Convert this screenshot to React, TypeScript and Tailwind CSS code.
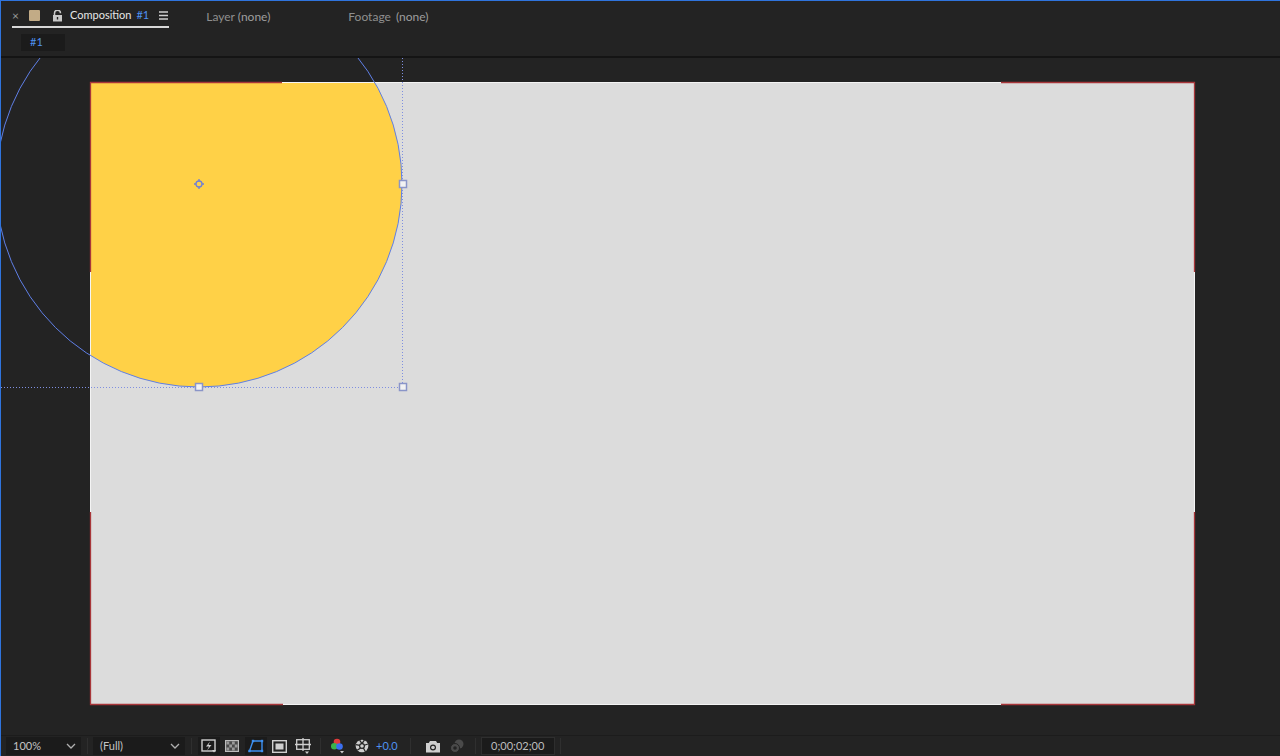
import React from 'react';

const font = { fontFamily: 'Lato, "Noto Sans", sans-serif' };

function Chevron() {
  return (
    <svg width="10" height="6" viewBox="0 0 10 6" className="shrink-0">
      <path d="M1 1l4 4 4-4" fill="none" stroke="#b0b0b0" strokeWidth="1.3" />
    </svg>
  );
}

export default function App() {
  // viewer coordinates (viewer origin = page x 1, y 58)
  const cx = 198, cy = 126, r = 203;
  const bx = 402, by = 329;
  const canvas = { x: 89, y: 24, w: 1105, h: 623 };
  return (
    <div className="w-[1280px] h-[756px] flex flex-col bg-[#232323] border-l border-t border-[#2f74dd] overflow-hidden" style={font}>
      {/* header */}
      <div className="h-[57px] flex flex-col border-b-2 border-[#141414] shrink-0">
        <div className="h-[27px] flex items-center text-[11px] pt-[4px]">
          <div className="flex items-center ml-[11px] h-full border-b-2 border-[#d8d8d8] pr-[1px]">
            <span className="text-[#9a9a9a] text-[12px] w-[16px] leading-none">×</span>
            <span className="w-[11px] h-[11px] bg-[#c2ab86] rounded-[1px] ml-[1px]" />
            <svg width="11" height="12" viewBox="0 0 11 12" className="ml-[12px]">
              <path d="M2.5 5V3.2a3 3 0 0 1 6 0" fill="none" stroke="#c8c8c8" strokeWidth="1.5" />
              <rect x="1" y="5" width="9" height="6.5" fill="#c8c8c8" />
              <rect x="4.8" y="7" width="1.4" height="2.5" fill="#232323" />
            </svg>
            <span className="text-[#e6e6e6] ml-[7px]">Composition</span>
            <span className="text-[#4f92f0] ml-[5px]">#1</span>
            <svg width="9" height="9" viewBox="0 0 9 9" className="ml-[10px]">
              <path d="M0 1h9M0 4.5h9M0 8h9" stroke="#cfcfcf" strokeWidth="1.3" />
            </svg>
          </div>
          <span className="ml-[37px] text-[12px] text-[#8f8f8f]">Layer <span className="text-[#9e9e9e]">(none)</span></span>
          <span className="ml-[78px] text-[12px] text-[#8f8f8f]">Footage <span className="text-[#9e9e9e] ml-[2px]">(none)</span></span>
        </div>
        <div className="flex-1 flex items-center">
          <div className="ml-[20px] w-[44px] h-[17px] bg-[#1b1b1b] flex items-center pl-[9px] text-[11px] text-[#4f92f0]">#1</div>
        </div>
      </div>

      {/* viewer */}
      <div className="relative flex-1 pl-[89px] pt-[24px] overflow-hidden">
        <div className="w-[1105px] h-[623px] bg-[#dcdcdc]" />
        <svg className="absolute inset-0" width="1280" height="679">
          <defs>
            <clipPath id="cv">
              <rect x={canvas.x} y={canvas.y} width={canvas.w} height={canvas.h} />
            </clipPath>
          </defs>
          <circle cx={cx} cy={cy} r={r} fill="#ffd147" clipPath="url(#cv)" />
          {/* canvas edge */}
          <rect x={canvas.x + 0.5} y={canvas.y + 0.5} width={canvas.w - 1} height={canvas.h - 1} fill="none" stroke="#f4f4f4" strokeWidth="1" />
          {/* red corners */}
          <g stroke="#a8363a" strokeWidth="1.3" fill="none">
            <path d={`M${canvas.x + 0.5} ${canvas.y + 190}V${canvas.y + 0.5}H${canvas.x + 192}`} />
            <path d={`M${canvas.x + canvas.w - 194} ${canvas.y + 0.5}H${canvas.x + canvas.w - 0.5}V${canvas.y + 190}`} />
            <path d={`M${canvas.x + 0.5} ${canvas.y + canvas.h - 193}V${canvas.y + canvas.h - 0.5}H${canvas.x + 193}`} />
            <path d={`M${canvas.x + canvas.w - 194} ${canvas.y + canvas.h - 0.5}H${canvas.x + canvas.w - 0.5}V${canvas.y + canvas.h - 193}`} />
          </g>
          {/* shape outline */}
          <circle cx={cx} cy={cy} r={r} fill="none" stroke="#5f7fe6" strokeWidth="1" />
          {/* bounding box */}
          <g stroke="#7f8fe0" strokeWidth="1" strokeDasharray="1 2" fill="none">
            <path d={`M${bx - 0.5} 0V${by}`} />
            <path d={`M0 ${by + 0.5}H${bx}`} />
          </g>
          {/* handles */}
          {[
            [bx, cy],
            [cx, by],
            [bx, by],
          ].map(([x, y], i) => (
            <rect key={i} x={x - 3.5} y={y - 3.5} width="7" height="7" fill="#f2f2f2" stroke="#8a95c8" strokeWidth="1.5" />
          ))}
          {/* anchor point */}
          <g stroke="#6f7fd6" strokeWidth="1.3" fill="none">
            <circle cx={cx} cy={cy} r="3" />
            <path d={`M${cx - 5} ${cy}h2M${cx + 3} ${cy}h2M${cx} ${cy - 5}v2M${cx} ${cy + 3}v2`} />
          </g>
        </svg>
      </div>

      {/* bottom bar */}
      <div className="h-[21px] shrink-0 flex items-center border-t border-[#1c1c1c] text-[11px] text-[#c4c4c4]">
        <div className="ml-[5px] w-[75px] h-[18px] bg-[#1b1b1b] flex items-center justify-between pl-[7px] pr-[5px]">
          <span>100%</span>
          <Chevron />
        </div>
        <div className="w-[12px] flex justify-center"><div className="w-px h-[16px] bg-[#2f2f2f]" /></div>
        <div className="w-[92px] h-[18px] bg-[#1b1b1b] flex items-center justify-between pl-[7px] pr-[5px]">
          <span>(Full)</span>
          <Chevron />
        </div>
        <div className="w-[13px] flex justify-center"><div className="w-px h-[16px] bg-[#2f2f2f]" /></div>
        {/* fast previews */}
        <div className="w-[22px] h-[18px] bg-[#1b1b1b] flex items-center justify-center">
          <svg width="16" height="14" viewBox="0 0 16 14">
            <rect x="1" y="1" width="13" height="11" fill="none" stroke="#cfcfcf" strokeWidth="1.4" />
            <path d="M9 2.5L5 7.5h3l-2 4 4.5-5.5H7.5z" fill="#cfcfcf" />
            <path d="M11 11h4l-2 2.5z" fill="#cfcfcf" />
          </svg>
        </div>
        {/* transparency grid */}
        <div className="w-[24px] flex items-center justify-center">
          <svg width="14" height="12" viewBox="0 0 14 12">
            <rect x="0.6" y="0.6" width="12.8" height="10.8" fill="#4a4a4a" stroke="#bdbdbd" strokeWidth="1.2" />
            {[0, 1, 2, 3].map((c) =>
              [0, 1, 2].map((rr) =>
                (c + rr) % 2 === 0 ? <rect key={`${c}-${rr}`} x={1.5 + c * 2.75} y={1.5 + rr * 3} width="2.75" height="3" fill="#9a9a9a" /> : null
              )
            )}
          </svg>
        </div>
        {/* mask path visibility (active) */}
        <div className="w-[22px] h-[18px] bg-[#1b1b1b] flex items-center justify-center ml-[1px]">
          <svg width="16" height="14" viewBox="0 0 16 14">
            <path d="M5 2h9v10H1.5z" fill="none" stroke="#3d8ff0" strokeWidth="1.4" />
            <rect x="3.8" y="0.8" width="2.4" height="2.4" fill="#3d8ff0" />
            <rect x="12.8" y="0.8" width="2.4" height="2.4" fill="#3d8ff0" />
            <rect x="0.3" y="10.8" width="2.4" height="2.4" fill="#3d8ff0" />
            <rect x="12.8" y="10.8" width="2.4" height="2.4" fill="#3d8ff0" />
          </svg>
        </div>
        {/* region of interest */}
        <div className="w-[24px] flex items-center justify-center">
          <svg width="15" height="13" viewBox="0 0 15 13">
            <rect x="0.7" y="0.7" width="13.6" height="11.6" fill="none" stroke="#cfcfcf" strokeWidth="1.4" />
            <rect x="3.5" y="3.5" width="8" height="6" fill="#cfcfcf" />
          </svg>
        </div>
        {/* grid & guides */}
        <div className="w-[24px] flex items-center justify-center">
          <svg width="16" height="16" viewBox="0 0 16 16">
            <rect x="1.7" y="1.7" width="12.6" height="9.6" fill="none" stroke="#cfcfcf" strokeWidth="1.3" />
            <path d="M8 0v13M0 6.5h16" stroke="#cfcfcf" strokeWidth="1.3" />
            <path d="M10 13.5h4l-2 2.5z" fill="#cfcfcf" />
          </svg>
        </div>
        <div className="w-[11px] flex justify-center"><div className="w-px h-[16px] bg-[#2f2f2f]" /></div>
        {/* channels */}
        <div className="w-[24px] flex items-center justify-center">
          <svg width="16" height="16" viewBox="0 0 16 16">
            <circle cx="7" cy="4" r="3.3" fill="#e23b3b" />
            <circle cx="4.3" cy="8.3" r="3.3" fill="#3cb34a" />
            <circle cx="9.5" cy="8.5" r="3.3" fill="#3b6ff0" />
            <path d="M10 13h4l-2 2.5z" fill="#cfcfcf" />
          </svg>
        </div>
        {/* exposure reset */}
        <div className="w-[24px] flex items-center justify-center">
          <svg width="14" height="14" viewBox="0 0 14 14">
            <circle cx="7" cy="7" r="6.3" fill="#cfcfcf" />
            <g fill="none" stroke="#232323" strokeWidth="1.2">
              <circle cx="7" cy="7" r="2.4" />
              <path d="M7 4.6L9.5 0.9" />
              <path d="M9.3 6.3l3.6-1.3" />
              <path d="M8.4 9L10.4 12.8" />
              <path d="M5.6 9L2.2 11.2" />
              <path d="M4.7 6.4L1 5.6" />
              <path d="M7 4.6L4.6 1.2" />
            </g>
          </svg>
        </div>
        <span className="text-[#4f92f0] ml-[2px]">+0.0</span>
        <div className="w-[25px] flex justify-center"><div className="w-px h-[16px] bg-[#2f2f2f]" /></div>
        {/* snapshot */}
        <div className="w-[20px] flex items-center justify-center">
          <svg width="16" height="13" viewBox="0 0 16 13">
            <path d="M5 1h6l1.2 2H15v9.5H1V3h2.8z" fill="#cfcfcf" />
            <circle cx="8" cy="7.5" r="3" fill="#232323" />
            <circle cx="8" cy="7.5" r="1.8" fill="#cfcfcf" />
          </svg>
        </div>
        {/* show snapshot (disabled) */}
        <div className="w-[28px] flex items-center justify-center">
          <svg width="16" height="14" viewBox="0 0 16 14">
            <circle cx="10" cy="5" r="4.5" fill="#4a4a4a" />
            <circle cx="6" cy="9" r="4.5" fill="#4a4a4a" stroke="#232323" strokeWidth="1" />
            <circle cx="6" cy="9" r="1.8" fill="#232323" />
          </svg>
        </div>
        <div className="w-[10px] flex justify-center"><div className="w-px h-[16px] bg-[#2f2f2f]" /></div>
        <div className="w-[74px] h-[18px] bg-[#1b1b1b] border border-[#2e2e2e] flex items-center justify-center text-[#bdbdbd]">
          0;00;02;00
        </div>
        <div className="w-[12px] flex justify-center"><div className="w-px h-[16px] bg-[#2f2f2f]" /></div>
      </div>
    </div>
  );
}
